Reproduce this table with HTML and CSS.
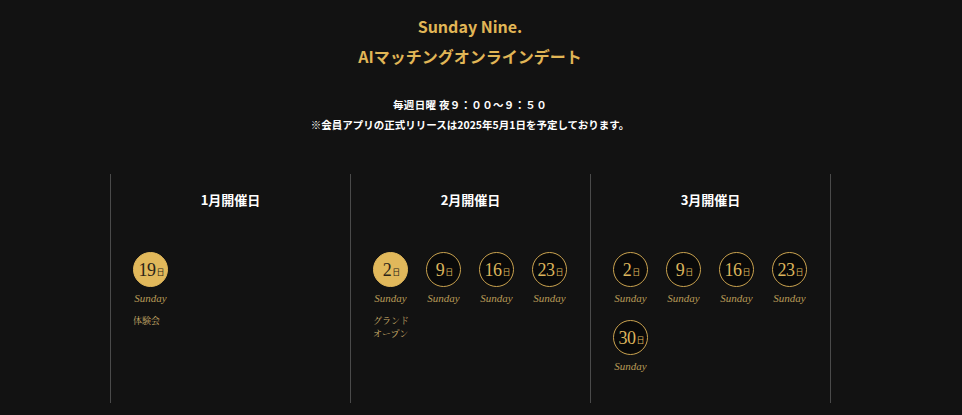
FILE: index.html
```html
<!DOCTYPE html>
<html lang="ja">
<head>
<meta charset="utf-8">
<title>Sunday Nine.</title>
<link rel="stylesheet" href="styles.css">
</head>
<body>
<div class="page">
  <header class="hero">
    <h1 class="title">Sunday Nine.</h1>
    <p class="subtitle">AIマッチングオンラインデート</p>
    <p class="time">毎週日曜 夜９：００～９：５０</p>
    <p class="note">※会員アプリの正式リリースは2025年5月1日を予定しております。</p>
  </header>

  <section class="months">
    <div class="month">
      <h2 class="month-title">1月開催日</h2>
      <div class="dates">
        <div class="date">
          <div class="circle filled"><span class="num">19</span><span class="day">日</span></div>
          <div class="dow">Sunday</div>
          <div class="label">体験会</div>
        </div>
      </div>
    </div>
    <div class="month">
      <h2 class="month-title">2月開催日</h2>
      <div class="dates">
        <div class="date">
          <div class="circle filled"><span class="num">2</span><span class="day">日</span></div>
          <div class="dow">Sunday</div>
          <div class="label"><span class="line">グランド</span><span class="line">オープン</span></div>
        </div>
        <div class="date">
          <div class="circle"><span class="num">9</span><span class="day">日</span></div>
          <div class="dow">Sunday</div>
        </div>
        <div class="date">
          <div class="circle"><span class="num">16</span><span class="day">日</span></div>
          <div class="dow">Sunday</div>
        </div>
        <div class="date">
          <div class="circle"><span class="num">23</span><span class="day">日</span></div>
          <div class="dow">Sunday</div>
        </div>
      </div>
    </div>
    <div class="month">
      <h2 class="month-title">3月開催日</h2>
      <div class="dates">
        <div class="date">
          <div class="circle"><span class="num">2</span><span class="day">日</span></div>
          <div class="dow">Sunday</div>
        </div>
        <div class="date">
          <div class="circle"><span class="num">9</span><span class="day">日</span></div>
          <div class="dow">Sunday</div>
        </div>
        <div class="date">
          <div class="circle"><span class="num">16</span><span class="day">日</span></div>
          <div class="dow">Sunday</div>
        </div>
        <div class="date">
          <div class="circle"><span class="num">23</span><span class="day">日</span></div>
          <div class="dow">Sunday</div>
        </div>
        <div class="date">
          <div class="circle"><span class="num">30</span><span class="day">日</span></div>
          <div class="dow">Sunday</div>
        </div>
      </div>
    </div>
  </section>
</div>
</body>
</html>
```
FILE: styles.css
```css
* { box-sizing: border-box; }
html, body {
  margin: 0;
  padding: 0;
  background: #121212;
}
body {
  font-family: "Noto Sans CJK JP", "Noto Sans", sans-serif;
  color: #fff;
  height: 415px;
  overflow: hidden;
}
.page {
  width: 940px;
  display: flex;
  flex-direction: column;
  align-items: center;
}
.hero {
  display: flex;
  flex-direction: column;
  align-items: center;
  padding-top: 11px;
}
.title, .subtitle {
  margin: 0;
  color: #e1b656;
  font-size: 16px;
  font-weight: 700;
  line-height: 30px;
}
.time, .note {
  margin: 0;
  font-size: 10.5px;
  font-weight: 700;
  line-height: 20px;
}
.time {
  margin-top: 24px;
  letter-spacing: 0.3px;
}
.months {
  margin-top: 39px;
  margin-left: 1px;
  display: grid;
  grid-template-columns: repeat(3, 240px);
  border-right: 1px solid #4a4a4a;
}
.month {
  border-left: 1px solid #4a4a4a;
  height: 229px;
  padding: 16px 0 0 22px;
}
.month-title {
  margin: 0 22px 0 0;
  text-align: center;
  font-size: 13px;
  font-weight: 700;
  line-height: 20px;
}
.dates {
  margin-top: 42px;
  display: flex;
  flex-wrap: wrap;
  column-gap: 18px;
  row-gap: 15px;
}
.date {
  width: 35px;
  display: flex;
  flex-direction: column;
  align-items: center;
  font-family: "Liberation Serif", "DejaVu Serif", "Noto Serif CJK JP", serif;
}
.circle {
  width: 35px;
  height: 35px;
  border-radius: 50%;
  border: 1px solid #c9a24f;
  background: #090909;
  color: #dcb45c;
  display: flex;
  align-items: center;
  justify-content: center;
  padding-left: 2px;
}
.circle.filled {
  background: #e1b85b;
  border-color: #e1b85b;
  color: #2b2418;
}
.num {
  font-size: 18px;
  line-height: 1;
  letter-spacing: -0.5px;
}
.day {
  font-family: "Noto Sans CJK JP", sans-serif;
  font-size: 8px;
  margin-left: 1px;
  margin-top: 3px;
}
.dow {
  margin-top: 5px;
  font-size: 11px;
  font-style: italic;
  line-height: 13px;
  color: #b89a57;
  white-space: nowrap;
}
.label {
  align-self: flex-start;
  margin-top: 9px;
  display: flex;
  flex-direction: column;
  font-family: "Noto Serif CJK JP", "Liberation Serif", serif;
  font-size: 9px;
  line-height: 13px;
  color: #c7aa69;
  white-space: nowrap;
}
.line { display: block; height: 13px; }
```
